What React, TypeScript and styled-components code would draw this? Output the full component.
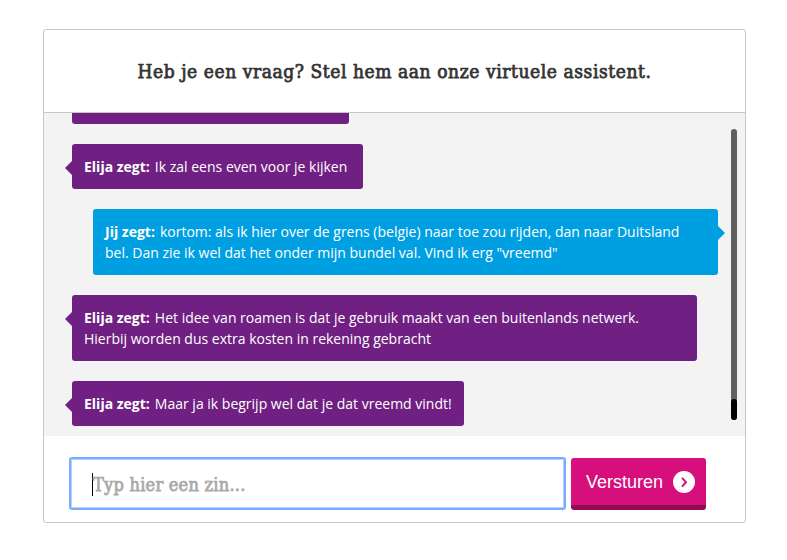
import React from "react";
import styled, { createGlobalStyle, css } from "styled-components";

const GlobalStyle = createGlobalStyle`
  *, *::before, *::after { box-sizing: border-box; }
  body { margin: 0; background: #fff; }
`;

const slab = css`
  font-family: "DejaVu Serif Condensed", "DejaVu Serif", serif;
  font-stretch: condensed;
  font-weight: 400;
  -webkit-text-stroke: 0.75px currentColor;
  white-space: nowrap;
`;

const Page = styled.main`
  padding: 29px 41px 37px 43px;
`;

const Card = styled.section`
  display: flex;
  flex-direction: column;
  width: 703px;
  height: 494px;
  border: 1px solid #c8c8c8;
  border-radius: 3px;
  background: #fff;
`;

const Header = styled.header`
  display: flex;
  align-items: center;
  justify-content: center;
  height: 83px;
  border-bottom: 1px solid #c8c8c8;
`;

const Title = styled.h1`
  ${slab}
  margin: 0;
  color: #333;
  font-size: 19px;
  line-height: 24px;
  letter-spacing: 0.58px;
`;

const Chat = styled.div`
  display: flex;
  height: 323px;
  background: #f3f3f3;
`;

const Messages = styled.div`
  display: flex;
  flex: 1;
  flex-direction: column;
  justify-content: flex-end;
  gap: 20px;
  padding: 0 13px 10px 28px;
  overflow: hidden;
`;

const Bubble = styled.div<{ $own?: boolean; $width: number }>`
  position: relative;
  flex: none;
  align-self: ${(p) => (p.$own ? "flex-end" : "flex-start")};
  width: ${(p) => p.$width}px;
  min-height: 45px;
  padding: 12px;
  border-radius: 3px;
  background: ${(p) => (p.$own ? "#009fe1" : "#702082")};
  color: #fff;
  font: 14px/21px "Open Sans", sans-serif;
  white-space: pre;

  &::before {
    content: "";
    position: absolute;
    top: 17px;
    ${(p) => (p.$own ? "left: 100%" : "right: 100%")};
    border: 7px solid transparent;
    ${(p) =>
      p.$own
        ? "border-left-color: #009fe1; border-right-width: 0"
        : "border-right-color: #702082; border-left-width: 0"};
  }
`;

const Speaker = styled.strong`
  margin-right: 5px;
  font-weight: 700;
`;

const Track = styled.div`
  display: flex;
  align-items: flex-end;
  width: 6px;
  height: 291px;
  margin: 16px 8px 0 0;
  border-radius: 3px;
  background: #606060;
`;

const Thumb = styled.div`
  width: 6px;
  height: 21px;
  border-radius: 3px;
  background: #000;
`;

const Form = styled.form`
  display: flex;
  align-items: flex-start;
  gap: 5px;
  padding: 21px 0 0 25px;
`;

const Field = styled.div`
  display: flex;
  align-items: center;
  width: 497px;
  height: 53px;
  padding: 1px 0 0 21px;
  border: 2px solid #7aabff;
  border-radius: 3px;
  background: #fff;
  box-shadow: inset 0 0 0 1px #b5d0ff;
`;

const Caret = styled.span`
  width: 1px;
  height: 23px;
  background: #000;
`;

const Placeholder = styled.span`
  ${slab}
  padding-top: 2px;
  color: #a9a9a9;
  font-size: 18px;
  line-height: 24px;
  letter-spacing: 0.25px;
`;

const Send = styled.button`
  display: flex;
  align-items: center;
  justify-content: space-between;
  width: 135px;
  height: 52px;
  margin-top: 1px;
  padding: 0 11px 0 15px;
  border: 0;
  border-bottom: 5px solid #930a57;
  border-radius: 3px;
  background: #d60f7d;
  color: #fff;
  font: 18px/22px "Liberation Sans", Arial, sans-serif;
`;

type Message = { text?: string; width: number; own?: boolean };

const messages: Message[] = [
  { width: 277 },
  { text: "Ik zal eens even voor je kijken", width: 291 },
  {
    own: true,
    text: 'kortom: als ik hier over de grens (belgie) naar toe zou rijden, dan naar Duitsland\nbel. Dan zie ik wel dat het onder mijn bundel val. Vind ik erg "vreemd"',
    width: 625,
  },
  {
    text: "Het idee van roamen is dat je gebruik maakt van een buitenlands netwerk.\nHierbij worden dus extra kosten in rekening gebracht",
    width: 625,
  },
  { text: "Maar ja ik begrijp wel dat je dat vreemd vindt!", width: 392 },
];

export default function App() {
  return (
    <Page>
      <GlobalStyle />
      <Card>
        <Header>
          <Title>Heb je een vraag? Stel hem aan onze virtuele assistent.</Title>
        </Header>
        <Chat>
          <Messages>
            {messages.map((m, i) => (
              <Bubble key={i} $own={m.own} $width={m.width}>
                {m.text && <Speaker>{m.own ? "Jij zegt:" : "Elija zegt:"}</Speaker>}
                {m.text}
              </Bubble>
            ))}
          </Messages>
          <Track>
            <Thumb />
          </Track>
        </Chat>
        <Form>
          <Field>
            <Caret />
            <Placeholder>Typ hier een zin...</Placeholder>
          </Field>
          <Send type="button">
            Versturen
            <svg width="22" height="22" viewBox="0 0 22 22">
              <circle cx="11" cy="11" r="11" fill="#fff" />
              <path
                d="M9 6.8l4 4.4-4 4.4"
                fill="none"
                stroke="#d60f7d"
                strokeWidth="2"
              />
            </svg>
          </Send>
        </Form>
      </Card>
    </Page>
  );
}
